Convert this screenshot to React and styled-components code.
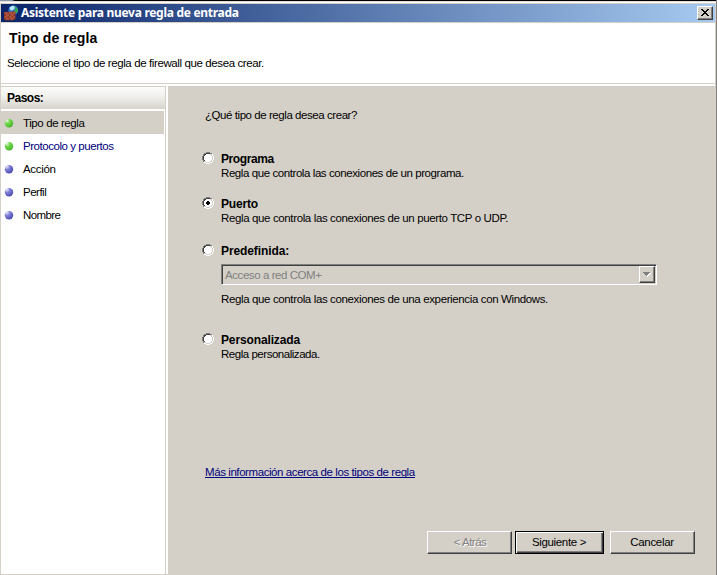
import React from "react";
import styled, { createGlobalStyle, css } from "styled-components";

const face = "#d4d0c8";

const GlobalStyle = createGlobalStyle`
  * { box-sizing: border-box; }
  html, body { margin: 0; padding: 0; }
  body {
    width: 717px;
    height: 575px;
    overflow: hidden;
    background: ${face};
    font-family: "Liberation Sans", Arial, sans-serif;
    color: #000;
  }
`;

const Window = styled.div`
  width: 717px;
  height: 575px;
  display: flex;
  flex-direction: column;
  background: ${face};
  border-right: 1px solid #808080;
`;

const TopEdge = styled.div`
  flex: none;
  height: 4px;
  background:
    linear-gradient(90deg, #8a97a8 0, #8a97a8 12px, #000 15px) 0 0 / 100% 1px no-repeat,
    linear-gradient(#e6dcd8, #e6dcd8) 0 1px / 100% 1px no-repeat,
    linear-gradient(#fff, #fff) 0 2px / 100% 1px no-repeat,
    ${face};
`;

const TitleBar = styled.div`
  flex: none;
  height: 18px;
  margin: 0 1px;
  padding: 0 2px;
  display: flex;
  align-items: center;
  background: linear-gradient(90deg, #0a246a, #a6caf0);
`;

const TitleText = styled.div`
  flex: 1;
  margin-left: 2px;
  font: bold 12px/18px "Noto Sans", Tahoma, sans-serif;
  letter-spacing: -0.29px;
  white-space: nowrap;
  color: #fff;
`;

const raised = css`
  border: 1px solid;
  border-color: #fff #404040 #404040 #fff;
  box-shadow: inset -1px -1px 0 #808080;
  background: ${face};
`;

const CloseButton = styled.button`
  ${raised}
  width: 16px;
  height: 14px;
  padding: 2px 0 0 3px;
  display: flex;
`;

const Header = styled.header`
  flex: none;
  height: 61px;
  margin: 1px 1px 0;
  padding: 7px 0 0 6px;
  background: #fff;
  border-bottom: 1px solid ${face};
`;

const Heading = styled.h1`
  margin: 0 0 10px 2px;
  font-size: 14px;
  line-height: 16px;
  letter-spacing: 0.12px;
`;

const Text = styled.div`
  font-size: 11.5px;
  line-height: 14px;
  letter-spacing: ${(p) => p.$spacing ?? -0.4}px;
  white-space: nowrap;
`;

const Body = styled.div`
  flex: 1;
  margin: 0 1px;
  display: flex;
  background: #fff;
  border-top: 2px solid #fff;
  border-bottom: 1px solid ${face};
`;

const Sidebar = styled.nav`
  width: 165px;
  flex: none;
  border-top: 1px solid ${face};
  border-right: 1px solid ${face};
`;

const StepsTitle = styled.div`
  height: 22px;
  margin-bottom: 2px;
  padding: 4px 0 0 6px;
  font-size: 12px;
  font-weight: bold;
  line-height: 14px;
  letter-spacing: -0.5px;
  background: linear-gradient(#fcfcfb, #f0efec 45%, #d6d3cb);
`;

const Step = styled.div`
  height: 23px;
  margin-right: 1px;
  padding-left: 3px;
  display: flex;
  align-items: center;
  gap: 9px;
  color: ${(p) => (p.$link ? "#00007c" : "#000")};
  background: ${(p) => (p.$current ? face : "transparent")};
`;

const Main = styled.main`
  flex: 1;
  display: flex;
  flex-direction: column;
  margin-left: 2px;
  padding: 22px 20px 20px 37px;
  background: ${face};
`;

const Option = styled.label`
  display: flex;
  align-items: flex-start;
  gap: 7px;
  margin: ${(p) => p.$before}px 0 0 -3px;
`;

const OptionBody = styled.div`
  display: flex;
  flex-direction: column;
`;

const OptionTitle = styled.div`
  font-size: 12px;
  font-weight: bold;
  line-height: 14px;
  letter-spacing: ${(p) => p.$spacing}px;
  white-space: nowrap;
`;

const Combo = styled.div`
  width: 436px;
  height: 21px;
  margin: 6px 0 7px;
  padding-left: 3px;
  display: flex;
  justify-content: space-between;
  align-items: center;
  border: 1px solid;
  border-color: #808080 #fff #fff #808080;
  box-shadow: inset 1px 1px 0 #404040, inset -1px -1px 0 ${face};
  color: #808080;
`;

const ComboButton = styled.div`
  ${raised}
  width: 16px;
  height: 17px;
  margin-right: 1px;
  display: flex;
  align-items: center;
  justify-content: center;
`;

const Link = styled.a`
  align-self: flex-start;
  height: 13px;
  margin-top: 104px;
  font-size: 11.5px;
  line-height: 14px;
  letter-spacing: -0.42px;
  white-space: nowrap;
  color: #00007c;
  border-bottom: 1px solid #00007c;
`;

const Buttons = styled.div`
  margin-top: auto;
  display: flex;
  justify-content: flex-end;
`;

const Button = styled.button`
  ${raised}
  width: 85px;
  height: 23px;
  padding: 0 1px 2px 0;
  font: 11.5px/14px "Liberation Sans", Arial, sans-serif;
  letter-spacing: ${(p) => p.$spacing}px;
  color: #000;
  ${(p) =>
    p.$default &&
    css`
      width: 89px;
      margin: 0 6px 0 3px;
      border-color: #000;
      box-shadow: inset 1px 1px 0 #fff, inset -1px -1px 0 #404040, inset -2px -2px 0 #808080;
    `}
  &:disabled {
    padding-left: 2px;
    color: #808080;
    text-shadow: 1px 1px 0 #fff;
  }
`;

const Glyph = styled.svg`
  display: block;
  flex: none;
`;

const radioRows = [
  "....gggg....",
  "..ggkkkkgg..",
  ".gkkwwwwllw.",
  ".gkwwwwwwlw.",
  "gkwwwwwwwwlw",
  "gkwwwwwwwwlw",
  "gkwwwwwwwwlw",
  "gkwwwwwwwwlw",
  ".gkwwwwwwlw.",
  ".gllwwwwllw.",
  "..wwllllww..",
  "....wwww....",
];
const radioColors = { g: "#808080", k: "#404040", w: "#fff", l: face };

function Radio({ checked }) {
  return (
    <Glyph width="12" height="12" shapeRendering="crispEdges">
      {radioRows.flatMap((row, y) =>
        [...row].map((c, x) =>
          c === "." ? null : (
            <rect key={`${x}-${y}`} x={x} y={y} width="1" height="1" fill={radioColors[c]} />
          )
        )
      )}
      {checked && <path d="M5 4h2v1h1v2h-1v1h-2v-1h-1v-2h1z" fill="#000" />}
    </Glyph>
  );
}

function Bullet({ green }) {
  const id = green ? "bullet-green" : "bullet-blue";
  return (
    <Glyph width="10" height="10" viewBox="0 0 10 10">
      <defs>
        <radialGradient id={id} cx="0.26" cy="0.2" r="0.85">
          <stop offset="0" stopColor={green ? "#ecfae6" : "#e6e6fa"} />
          <stop offset="0.42" stopColor={green ? "#6cd548" : "#7e7ed4"} />
          <stop offset="0.8" stopColor={green ? "#58c634" : "#5e5ec2"} />
          <stop offset="1" stopColor={green ? "#46a82a" : "#4a4aa6"} />
        </radialGradient>
      </defs>
      <circle cx="5" cy="5.2" r="4.2" fill={`url(#${id})`} />
    </Glyph>
  );
}

function FirewallIcon() {
  return (
    <Glyph width="16" height="16" viewBox="0 0 16 16">
      <circle cx="10.3" cy="5.3" r="4.9" fill="#2878d0" />
      <path d="M6.5 2.5Q8.5 .4 11 .8L12 3 9.5 5.5 7 5z" fill="#b9e6f4" />
      <path d="M11.5 1.2Q15 2.6 15 6L13 8.5 11 6.5 12.5 4z" fill="#3cab43" />
      <path d="M1 7.2L11.5 6.2 12.5 7.2V14L10.5 15.2H2L1 14z" fill="#8e3524" />
      <path d="M1.5 8h3M6 8h3M10 8h2M3 10h3M7.5 10h3M1.5 12h3M6 12h3M10 12h2M3 14h3M7.5 14h3" stroke="#c4735a" />
    </Glyph>
  );
}

const steps = [
  { name: "Tipo de regla", spacing: -0.4, green: true, current: true },
  { name: "Protocolo y puertos", spacing: -0.45, green: true, link: true },
  { name: "Acción", spacing: -0.33 },
  { name: "Perfil", spacing: -0.5 },
  { name: "Nombre", spacing: -0.6 },
];

export default function App() {
  return (
    <>
      <GlobalStyle />
      <Window>
        <TopEdge />
        <TitleBar>
          <FirewallIcon />
          <TitleText>Asistente para nueva regla de entrada</TitleText>
          <CloseButton aria-label="Cerrar">
            <Glyph width="8" height="7" shapeRendering="crispEdges">
              <path
                d="M0 0h2v1h1v1h2v-1h1v-1h2v1h-1v1h-1v1h-1v1h1v1h1v1h1v1h-2v-1h-1v-1h-2v1h-1v1h-2v-1h1v-1h1v-1h1v-1h-1v-1h-1v-1h-1z"
                fill="#000"
              />
            </Glyph>
          </CloseButton>
        </TitleBar>
        <Header>
          <Heading>Tipo de regla</Heading>
          <Text $spacing={-0.39}>Seleccione el tipo de regla de firewall que desea crear.</Text>
        </Header>
        <Body>
          <Sidebar>
            <StepsTitle>Pasos:</StepsTitle>
            {steps.map((s) => (
              <Step key={s.name} $current={s.current} $link={s.link}>
                <Bullet green={s.green} />
                <Text $spacing={s.spacing}>{s.name}</Text>
              </Step>
            ))}
          </Sidebar>
          <Main>
            <Text $spacing={-0.44}>¿Qué tipo de regla desea crear?</Text>
            <Option $before={30}>
              <Radio />
              <OptionBody>
                <OptionTitle $spacing={-0.4}>Programa</OptionTitle>
                <Text $spacing={-0.42}>Regla que controla las conexiones de un programa.</Text>
              </OptionBody>
            </Option>
            <Option $before={17}>
              <Radio checked />
              <OptionBody>
                <OptionTitle $spacing={-0.2}>Puerto</OptionTitle>
                <Text $spacing={-0.37}>Regla que controla las conexiones de un puerto TCP o UDP.</Text>
              </OptionBody>
            </Option>
            <Option $before={19}>
              <Radio />
              <OptionBody>
                <OptionTitle $spacing={-0.1}>Predefinida:</OptionTitle>
                <Combo>
                  <Text $spacing={-0.43}>Acceso a red COM+</Text>
                  <ComboButton>
                    <Glyph width="8" height="5" shapeRendering="crispEdges">
                      <path d="M1 1h7v1h-1v1h-1v1h-1v1h-1v-1z" fill="#fff" />
                      <path d="M0 0h7v1h-1v1h-1v1h-1v1h-1v-1h-1v-1h-1v-1h-1z" fill="#808080" />
                    </Glyph>
                  </ComboButton>
                </Combo>
                <Text $spacing={-0.37}>Regla que controla las conexiones de una experiencia con Windows.</Text>
              </OptionBody>
            </Option>
            <Option $before={27}>
              <Radio />
              <OptionBody>
                <OptionTitle $spacing={-0.13}>Personalizada</OptionTitle>
                <Text $spacing={-0.47}>Regla personalizada.</Text>
              </OptionBody>
            </Option>
            <Link>Más información acerca de los tipos de regla</Link>
            <Buttons>
              <Button disabled $spacing={-0.5}>&lt; Atrás</Button>
              <Button $default $spacing={-0.35}>Siguiente &gt;</Button>
              <Button $spacing={-0.31}>Cancelar</Button>
            </Buttons>
          </Main>
        </Body>
      </Window>
    </>
  );
}
